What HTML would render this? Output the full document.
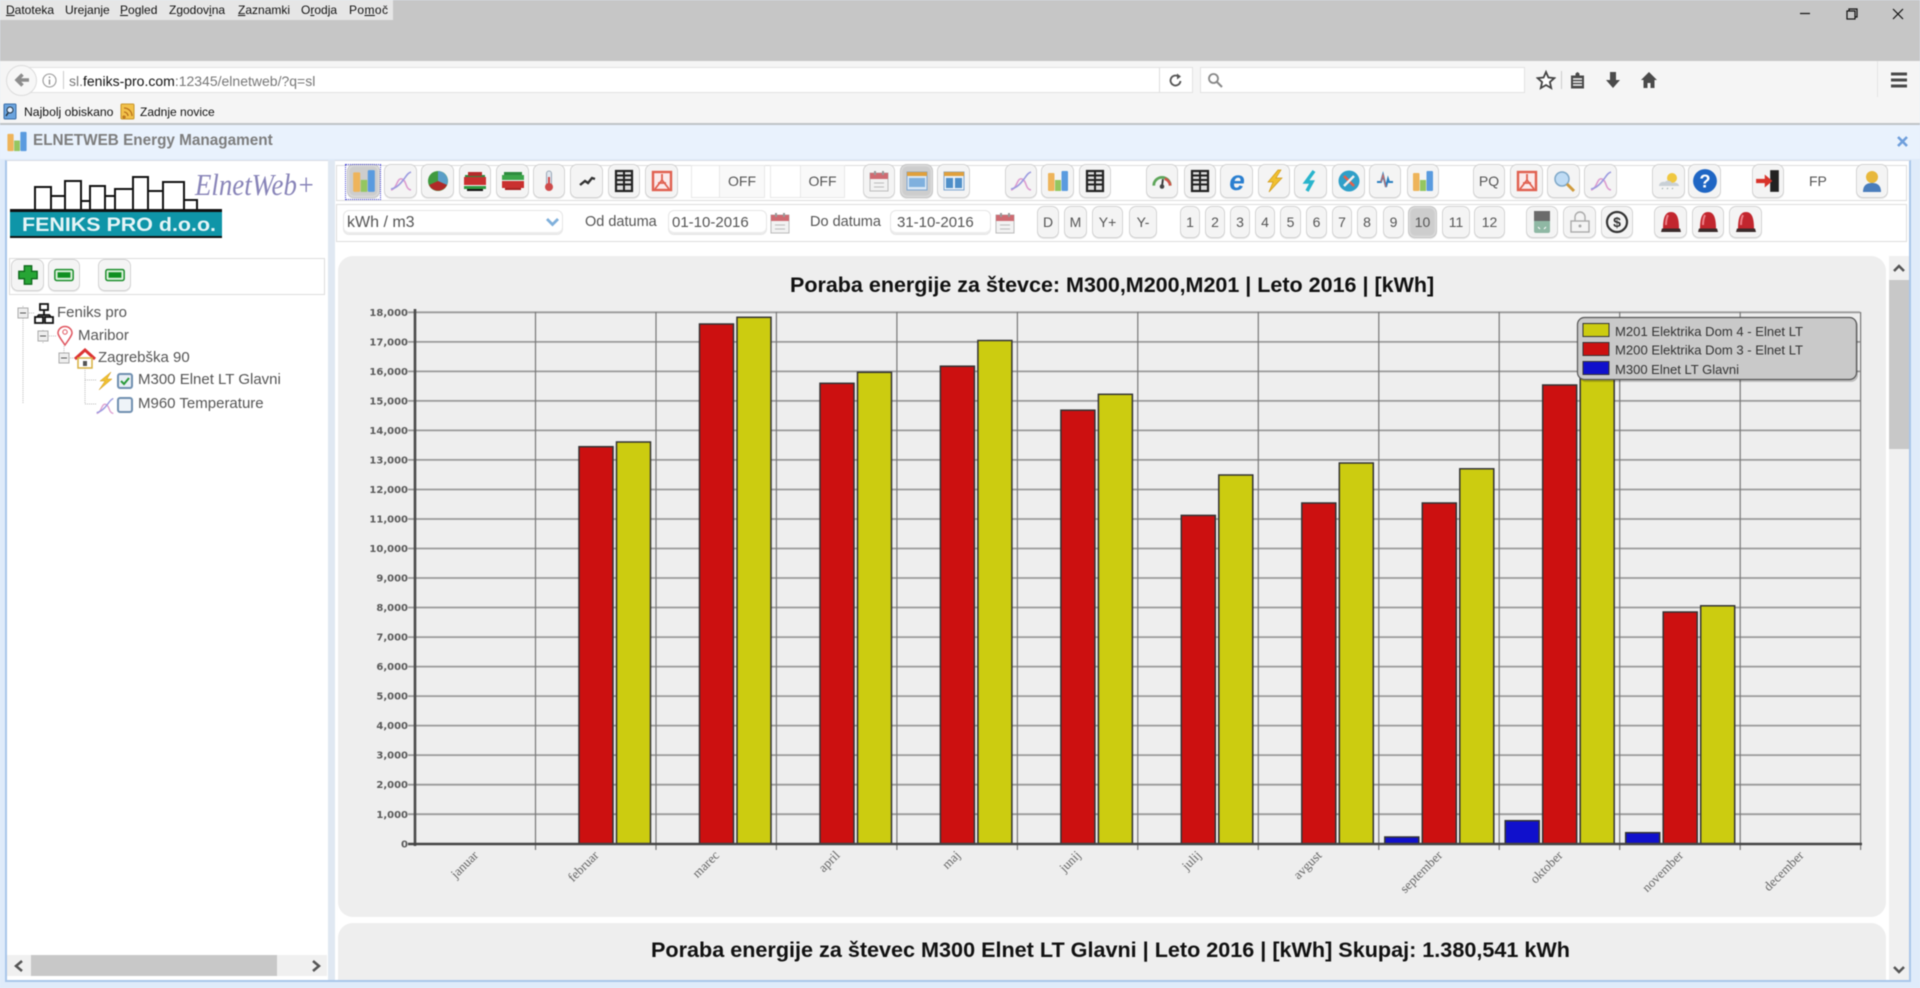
<!DOCTYPE html>
<html lang="sl"><head><meta charset="utf-8"><title>ELNETWEB Energy Managament</title>
<style>
html,body{margin:0;padding:0;width:1920px;height:988px;overflow:hidden;background:#e0ecfb;font-family:"Liberation Sans",sans-serif;color:#333}
#w{position:absolute;left:0;top:0;width:1920px;height:988px;overflow:hidden;filter:blur(.5px)}
.a,.b,.t,svg.a{position:absolute}
.b{box-sizing:border-box;background:#f4f4f4;border:1.5px solid #d2d2d2;border-radius:7px;box-shadow:inset 0 0 2px #fff,0 1px 0 #e8e8e8;display:flex;align-items:center;justify-content:center;font-size:14px;color:#555}
.b.on{background:#cdcdcd;border-color:#c4c4c4}
.r1{top:164px;height:34px}.r2{top:206px;height:32px}
.t{white-space:nowrap}
.m{top:3px;font-size:12px;color:#111;line-height:14px}
.tr{font-size:15px;color:#555;line-height:16px}
.inp{box-sizing:border-box;position:absolute;top:210px;height:25px;background:#fff;border:1px solid #e6e6e6;border-radius:6px;box-shadow:inset 0 -2px 0 #ececec;font-size:15px;color:#555;line-height:24px}
.off{position:absolute;top:165px;height:33px;box-sizing:border-box;background:#fff;border:1px solid #e8e8e8;font-size:14px;color:#555;text-align:center;line-height:31px}
</style></head><body><div id="w">

<svg width="0" height="0" style="position:absolute"><defs>
<symbol id="bars" viewBox="0 0 24 24"><rect x="2" y="4" width="6.500" height="18" rx="1" fill="#eeb45a"/><rect x="9" y="11" width="6" height="11" fill="#94c660"/><rect x="15.500" y="2" width="6.500" height="20" rx="1" fill="#5a9bdf"/></symbol>
<symbol id="curve" viewBox="0 0 24 24"><path d="M2 21C8 20 8 8 13 10S16 20 22 21" fill="none" stroke="#dc9ccf" stroke-width="1.600"/><path d="M2 20C8 19 12 14 15 10S19 4 22 3" fill="none" stroke="#9a9ae0" stroke-width="1.600"/></symbol>
<symbol id="pie" viewBox="0 0 24 24"><circle cx="12" cy="12" r="10" fill="#3f9a3f"/><path d="M12 12V2A10 10 0 0 1 21 16Z" fill="#5a9ec8"/><path d="M12 12L21 16A10 10 0 0 1 3 16Z" fill="#b02828"/></symbol>
<symbol id="st1" viewBox="0 0 24 24"><path d="M2 6h20v3H2z" fill="#2e8b3e"/><path d="M5 3h14v4H5z" fill="#b52a2a"/><path d="M1 8h22v8H1z" fill="#c93030"/><path d="M1 17h22v3H1z" fill="#2e9a40"/><path d="M4 20h16v2H4z" fill="#111"/></symbol>
<symbol id="st2" viewBox="0 0 24 24"><path d="M3 3h18v3H3z" fill="#2e8b3e"/><path d="M1 6h22v5H1z" fill="#3ca54a"/><path d="M1 12h22v7H1z" fill="#c93030"/><path d="M4 19h16v2H4z" fill="#a82222"/></symbol>
<symbol id="therm" viewBox="0 0 24 24"><rect x="9.500" y="2" width="5" height="16" rx="2.500" fill="#dfe6ee" stroke="#9aa8b8"/><circle cx="12" cy="18" r="4" fill="#cf4a4a"/><rect x="11" y="8" width="2" height="9" fill="#cf4a4a"/></symbol>
<symbol id="trend" viewBox="0 0 24 24"><path d="M5 16l5-4 3 2 4-5 3 1" fill="none" stroke="#333" stroke-width="2.400"/></symbol>
<symbol id="tbl" viewBox="0 0 24 24"><rect x="4" y="2" width="16" height="20" fill="#ddd" stroke="#222" stroke-width="2.200"/><path d="M4 6.500h16M4 11h16M4 15.500h16M12 2v20" stroke="#222" stroke-width="2" fill="none"/></symbol>
<symbol id="pdf" viewBox="0 0 24 24"><rect x="3" y="3" width="18" height="18" fill="#fbeaea" stroke="#e0604f" stroke-width="2.400"/><path d="M12 5v6L5 20M12 11l7 9M8 14h8" fill="none" stroke="#e0604f" stroke-width="1.800"/></symbol>
<symbol id="cal" viewBox="0 0 24 24"><rect x="3" y="4" width="18" height="18" fill="#f2f2f2" stroke="#bbb"/><rect x="3" y="4" width="18" height="6" fill="#cf6b72"/><rect x="7" y="2" width="2" height="4" fill="#999"/><rect x="15" y="2" width="2" height="4" fill="#999"/><path d="M7 14h10M7 18h10" stroke="#bbb"/></symbol>
<symbol id="win" viewBox="0 0 24 24"><rect x="2" y="3" width="20" height="18" fill="#d9e7f5" stroke="#7ea6cf"/><rect x="2" y="3" width="20" height="4" fill="#e0a03c"/><rect x="4" y="9" width="16" height="9" fill="#7fb0de"/></symbol>
<symbol id="win2" viewBox="0 0 24 24"><rect x="2" y="3" width="20" height="18" fill="#e8f0f8" stroke="#7ea6cf"/><rect x="2" y="3" width="20" height="4" fill="#e0a03c"/><rect x="4" y="9" width="7" height="10" fill="#4f8fc8"/><rect x="13" y="9" width="7" height="10" fill="#4f8fc8"/></symbol>
<symbol id="gauge" viewBox="0 0 24 24"><path d="M3 17A9 9 0 0 1 21 17" fill="none" stroke="#5ea65a" stroke-width="3"/><path d="M15 9.500A9 9 0 0 1 21 17" fill="none" stroke="#d0524a" stroke-width="3"/><path d="M12 18l1-8" stroke="#333" stroke-width="2"/><circle cx="12" cy="18" r="2.500" fill="#444"/></symbol>
<symbol id="ie" viewBox="0 0 24 24"><text x="12" y="21" text-anchor="middle" font-family="Liberation Sans" font-weight="700" font-style="italic" font-size="28" fill="#2a7fd0">e</text></symbol>
<symbol id="bolt" viewBox="0 0 24 24"><path d="M16 1L6 13h5l-4 10L20 9h-6l5-8z" fill="#f0c030" stroke="#d09818" stroke-width=".7"/></symbol>
<symbol id="bolt2" viewBox="0 0 24 24"><path d="M15 2L7 13h6l-5 9" fill="none" stroke="#28b4cc" stroke-width="3.500"/></symbol>
<symbol id="tools" viewBox="0 0 24 24"><circle cx="12" cy="12" r="10.500" fill="#2f9fc8"/><path d="M7 7l10 10" stroke="#e8604a" stroke-width="2.500"/><path d="M17 7L7 17" stroke="#f0f0f0" stroke-width="2.500"/></symbol>
<symbol id="pulse" viewBox="0 0 24 24"><path d="M4 13h4l2-7 3 12 2-8 1 3h4" fill="none" stroke="#2a7fc0" stroke-width="2"/><path d="M8 13l2-7 3 12" fill="none" stroke="#e06a5a" stroke-width="1"/></symbol>
<symbol id="search" viewBox="0 0 24 24"><circle cx="10" cy="10" r="7" fill="#bfdcf5" stroke="#7fa8c8" stroke-width="1.500"/><path d="M15 15l7 7" stroke="#d09a3c" stroke-width="3"/></symbol>
<symbol id="cloud" viewBox="0 0 24 24"><circle cx="15" cy="9" r="5" fill="#f0c840"/><path d="M2 17c0-3 3-5 6-4 1-2 6-2 7 1 3-1 7 0 7 3H2z" fill="#c9d0d6"/><path d="M5 20l1-1M10 20l1-1M15 20l1-1" stroke="#9aa" /></symbol>
<symbol id="help" viewBox="0 0 24 24"><circle cx="12" cy="12" r="11" fill="#1f66c4"/><text x="12" y="18" text-anchor="middle" font-family="Liberation Sans" font-weight="700" font-size="17" fill="#fff">?</text></symbol>
<symbol id="exit" viewBox="0 0 24 24"><rect x="14" y="2" width="8" height="20" fill="#222"/><path d="M1 10h8V6l7 6-7 6v-4H1z" fill="#d8332a"/></symbol>
<symbol id="user" viewBox="0 0 24 24"><circle cx="12" cy="8" r="6" fill="#e8b83c"/><path d="M3 23c0-7 4-9 9-9s9 2 9 9z" fill="#4a7dbc"/></symbol>
<symbol id="meter" viewBox="0 0 24 24"><rect x="4" y="1" width="16" height="22" rx="2" fill="#8fb8a4"/><rect x="4" y="1" width="16" height="10" fill="#6b6b6b"/><path d="M8 17l2 2M16 17l-2 2" stroke="#fff"/></symbol>
<symbol id="lock" viewBox="0 0 24 24"><rect x="3" y="11" width="18" height="11" fill="#f4f4f4" stroke="#aaa" stroke-width="1.400"/><path d="M7 11V7a5 5 0 0 1 10 0v4" fill="none" stroke="#aaa" stroke-width="1.400"/><circle cx="12" cy="16" r="1.500" fill="#aaa"/></symbol>
<symbol id="dollar" viewBox="0 0 24 24"><circle cx="12" cy="12" r="10" fill="#f4f4f4" stroke="#333" stroke-width="2.200"/><text x="12" y="17" text-anchor="middle" font-family="Liberation Sans" font-weight="700" font-size="14" fill="#333">$</text></symbol>
<symbol id="alarm" viewBox="0 0 24 24"><path d="M4 19C4 8 6 2 12 2s8 6 8 17z" fill="#c2262e"/><path d="M9 5c-1.500 3-2 6-2 10" stroke="#ee8088" stroke-width="2" fill="none"/><path d="M3 18.500h18l1 3.500H2z" fill="#3a2a2a"/></symbol>
<symbol id="plus" viewBox="0 0 24 24"><path d="M8 2h8v6h6v8h-6v6H8v-6H2V8h6z" fill="#27a535" stroke="#0e6a1c" stroke-width="1.500"/></symbol>
<symbol id="minus" viewBox="0 0 24 24"><rect x="2" y="6" width="20" height="12" rx="2" fill="#d8efd8" stroke="#148a24" stroke-width="1.500"/><rect x="5" y="9" width="14" height="6" fill="#0f8f20"/></symbol>
</defs></svg>

<!-- browser chrome -->
<div class="a" style="left:0;top:0;width:1920px;height:61px;background:#c6c6c6"></div>
<div class="a" style="left:0;top:0;width:393px;height:20px;background:#e6e6e6"></div>
<span class="t m" style="left:6px"><u>D</u>atoteka</span>
<span class="t m" style="left:65px">Ure<u>j</u>anje</span>
<span class="t m" style="left:120px"><u>P</u>ogled</span>
<span class="t m" style="left:169px">Zgodov<u>i</u>na</span>
<span class="t m" style="left:238px"><u>Z</u>aznamki</span>
<span class="t m" style="left:301px">O<u>r</u>odja</span>
<span class="t m" style="left:349px;letter-spacing:.4px">Po<u>m</u>oč</span>
<svg class="a" style="left:1795px;top:4px" width="115" height="22" fill="none" stroke="#111" stroke-width="1.200"><path d="M5 9.500h10"/><rect x="52" y="7" width="8" height="8" fill="#c6c6c6"/><path d="M54 7V5h8v8h-2"/><path d="M98 5l10 10M108 5L98 15"/></svg>

<div class="a" style="left:0;top:61px;width:1920px;height:62px;background:#f5f5f5"></div>
<div class="a" style="left:22px;top:67px;width:1171px;height:26px;background:#fff;border:1px solid #e2e2e2;box-sizing:border-box"></div>
<div class="a" style="left:6px;top:65px;width:31px;height:31px;border-radius:50%;background:#f7f7f7;border:1px solid #dcdcdc;box-sizing:border-box"></div>
<svg class="a" style="left:13px;top:71px" width="18" height="18"><path d="M16 9H6M9.500 3.500L4 9l5.500 5.500" fill="none" stroke="#8d8d8d" stroke-width="3.500"/></svg>
<svg class="a" style="left:42px;top:73px" width="15" height="15"><circle cx="7.500" cy="7.500" r="6.500" fill="none" stroke="#999" stroke-width="1.100"/><path d="M7.500 6.500v5M7.500 3.500v1.500" stroke="#888" stroke-width="1.300"/></svg>
<div class="a" style="left:63px;top:71px;width:1px;height:18px;background:#ccc"></div>
<div class="t" style="left:69px;top:72px;font-size:14px;color:#777;line-height:18px">sl.<span style="color:#111">feniks-pro.com</span>:12345/elnetweb/?q=sl</div>
<div class="a" style="left:1159px;top:68px;width:1px;height:24px;background:#ddd"></div>
<svg class="a" style="left:1168px;top:73px" width="15" height="15"><path d="M12.500 8A5 5 0 1 1 10.500 3.500" fill="none" stroke="#555" stroke-width="1.800"/><path d="M9 0.500L13 3.500 9 6.500z" fill="#555"/></svg>
<div class="a" style="left:1200px;top:67px;width:325px;height:26px;background:#fff;border:1px solid #e2e2e2;box-sizing:border-box"></div>
<svg class="a" style="left:1207px;top:72px" width="16" height="16"><circle cx="6.500" cy="6.500" r="4.500" fill="none" stroke="#888" stroke-width="1.800"/><path d="M10 10l5 5" stroke="#888" stroke-width="2"/></svg>
<svg class="a" style="left:1536px;top:70px" width="20" height="20"><path d="M10 2l2.400 5.500 6 .6-4.500 4 1.300 6L10 15l-5.200 3.100 1.300-6-4.500-4 6-.6z" fill="#fff" stroke="#444" stroke-width="1.800"/></svg>
<div class="a" style="left:1561px;top:71px;width:1px;height:18px;background:#ccc"></div>
<svg class="a" style="left:1570px;top:71px" width="15" height="18"><path d="M1 4.500h4.500V2.500L7.500 1 9.500 2.500v2H14v13H1z" fill="#4a4a4a"/><path d="M3 8h9M3 11h9M3 14h9" stroke="#f5f5f5" stroke-width="1.400"/></svg>
<svg class="a" style="left:1605px;top:71px" width="16" height="18"><path d="M5 1h6v8h4l-7 8-7-8h4z" fill="#4a4a4a"/></svg>
<svg class="a" style="left:1641px;top:71px" width="16" height="18"><path d="M8 1L0 9h2.500v8h4v-5h3v5h4V9H16z" fill="#4a4a4a"/></svg>
<div class="a" style="left:1877px;top:61px;width:1px;height:36px;background:#e4e4e4"></div>
<svg class="a" style="left:1891px;top:72px" width="16" height="16"><path d="M0 2h16M0 8h16M0 14h16" stroke="#4a4a4a" stroke-width="3"/></svg>
<svg class="a" style="left:3px;top:103px" width="16" height="17"><rect x="1" y="1" width="12" height="15" rx="1" fill="#6ba4de" stroke="#3a6ea8"/><circle cx="7" cy="7" r="3" fill="#dfeeff" stroke="#234"/><path d="M5 10l-2 3" stroke="#234" stroke-width="1.500"/></svg>
<div class="t" style="left:24px;top:104px;font-size:12.200px;color:#111;line-height:16px">Najbolj obiskano</div>
<svg class="a" style="left:120px;top:103px" width="15" height="17"><rect x="1" y="1" width="13" height="15" rx="1" fill="#f2c14a" stroke="#c8962c"/><path d="M4 13a1 1 0 1 0 .1 0M4 9a4 4 0 0 1 4 4M4 5a8 8 0 0 1 8 8" stroke="#b8701c" fill="none" stroke-width="1.300"/></svg>
<div class="t" style="left:140px;top:104px;font-size:12px;color:#111;line-height:16px">Zadnje novice</div>
<div class="a" style="left:0;top:123px;width:1920px;height:2px;background:#bfc3c6"></div>

<!-- app head -->
<div class="a" style="left:0;top:125px;width:1920px;height:34px;background:#e9f2fd"></div>
<svg class="a" style="left:5px;top:130px" width="24" height="23"><use href="#bars"/></svg>
<div class="t" style="left:33px;top:132px;font-size:15.300px;font-weight:700;color:#7d7d7d;line-height:18px">ELNETWEB Energy Managament</div>
<svg class="a" style="left:1897px;top:136px" width="11" height="11"><path d="M1 1l9 9M10 1l-9 9" stroke="#6f9fdc" stroke-width="2.600"/></svg>

<!-- frame -->
<div class="a" style="left:0;top:159px;width:1920px;height:829px;background:#dfebfa"></div>
<div class="a" style="left:5px;top:160px;width:323px;height:822px;background:#fff;border-left:2px solid #a9c6ea;border-top:1px solid #d8dde3;border-bottom:2px solid #a9c6ea;box-sizing:border-box"></div>
<div class="a" style="left:328px;top:160px;width:7px;height:822px;background:#e0e8f2;border-bottom:2px solid #a9c6ea;box-sizing:border-box"></div>
<div class="a" style="left:335px;top:160px;width:1576px;height:822px;background:#fff;border-right:2px solid #a9c6ea;border-bottom:2px solid #a9c6ea;border-top:1px solid #d8dde3;box-sizing:border-box"></div>

<!-- logo -->
<svg class="a" style="left:0;top:160px" width="328" height="85" viewBox="0 160 328 85">
<g fill="none" stroke="#111" stroke-width="2"><rect x="35" y="187" width="16" height="23"/><rect x="51" y="196" width="14" height="14"/><rect x="65" y="181" width="16" height="29"/><rect x="81" y="201" width="9" height="9"/><rect x="90" y="186" width="15" height="24"/><rect x="105" y="196" width="10" height="14"/><rect x="115" y="189" width="18" height="21"/><rect x="133" y="177" width="15" height="33"/><rect x="148" y="191" width="15" height="19"/><rect x="163" y="182" width="21" height="28"/><rect x="184" y="200" width="13" height="10"/></g>
<rect x="10" y="209" width="212" height="29" fill="#111"/><rect x="10" y="212" width="212" height="24" fill="#0f95a8"/>
<text x="22" y="231" font-family="Liberation Sans" font-weight="700" font-size="19" fill="#e6f5f7" textLength="194" lengthAdjust="spacingAndGlyphs">FENIKS PRO d.o.o.</text>
<text x="195" y="195" font-family="Liberation Serif" font-style="italic" font-size="31" fill="#8884b8" textLength="120" lengthAdjust="spacingAndGlyphs">ElnetWeb+</text>
</svg>

<!-- tree toolbar -->
<div class="a" style="left:9px;top:258px;width:316px;height:37px;background:#fff;border:1px solid #ddd;box-sizing:border-box"></div>
<div class="b" style="left:11px;top:259px;width:33px;height:32px"><svg width="22" height="22"><use href="#plus"/></svg></div>
<div class="b" style="left:48px;top:259px;width:32px;height:32px"><svg width="22" height="22"><use href="#minus"/></svg></div>
<div class="b" style="left:98px;top:259px;width:33px;height:32px"><svg width="22" height="22"><use href="#minus"/></svg></div>

<!-- tree -->
<svg class="a" style="left:10px;top:300px" width="130" height="120" viewBox="10 300 130 120">
<g stroke="#bbb" stroke-dasharray="1 1" fill="none"><path d="M23 306V404M23 313H34M43 336H57M43 330V344M64 344V358M64 358H75M85 368V404M85 380H97M85 404H96"/></g>
<g fill="#eee" stroke="#aaa"><rect x="18" y="308" width="10" height="10"/><rect x="38" y="331" width="10" height="10"/><rect x="59" y="353" width="10" height="10"/></g>
<path d="M20 313h6M40 336h6M61 358h6" stroke="#555"/>
<g fill="none" stroke="#111" stroke-width="1.800"><rect x="40" y="304" width="8" height="6"/><path d="M44 310v5M38 315h12M38 315v2M50 315v2"/><rect x="35" y="317" width="8" height="6"/><rect x="45" y="317" width="8" height="6"/></g>
<path d="M65 345C60 338 58 335 58 333a7 6.500 0 0 1 14 0C72 335 70 338 65 345z" fill="#fff" stroke="#e0555f" stroke-width="1.500"/><circle cx="65" cy="332" r="2.200" fill="none" stroke="#e0555f"/>
<path d="M75 359L85 350 95 359" fill="none" stroke="#d33" stroke-width="3"/><rect x="78" y="358" width="14" height="10" fill="#fff" stroke="#d8b040" stroke-width="1.500"/><rect x="83" y="361" width="4" height="5" fill="#555"/>
<path d="M111 372L100 381h5l-6 9 13-11h-5z" fill="#f0c030" stroke="#d09818" stroke-width=".5"/>
<g><use href="#curve" x="95" y="396" width="20" height="20"/></g>
<rect x="118" y="374" width="14" height="14" rx="2" fill="#e8eef5" stroke="#6f8fb0" stroke-width="2"/><path d="M121 381l3 3 5-6" fill="none" stroke="#2a9a3a" stroke-width="2"/>
<rect x="118" y="398" width="14" height="14" rx="2" fill="#eef3f8" stroke="#6f8fb0" stroke-width="2"/>
</svg>
<div class="t tr" style="left:57px;top:305px">Feniks pro</div>
<div class="t tr" style="left:78px;top:328px">Maribor</div>
<div class="t tr" style="left:98px;top:350px">Zagrebška 90</div>
<div class="t tr" style="left:138px;top:372px">M300 Elnet LT Glavni</div>
<div class="t tr" style="left:138px;top:396px">M960 Temperature</div>

<!-- left h-scrollbar -->
<div class="a" style="left:7px;top:955px;width:320px;height:21px;background:#f0f0f0"></div>
<div class="a" style="left:31px;top:955px;width:246px;height:21px;background:#c8c8c8"></div>
<svg class="a" style="left:14px;top:960px" width="10" height="12"><path d="M8 1L2 6l6 5" fill="none" stroke="#555" stroke-width="2.500"/></svg>
<svg class="a" style="left:311px;top:960px" width="10" height="12"><path d="M2 1l6 5-6 5" fill="none" stroke="#555" stroke-width="2.500"/></svg>

<!-- toolbars -->
<div class="a" style="left:336px;top:165px;width:1571px;height:36px;background:#fff;border:1px solid #ddd;box-sizing:border-box"></div>
<div class="a" style="left:336px;top:204px;width:1571px;height:38px;background:#fff;border:1px solid #ddd;box-sizing:border-box"></div>

<div class="b r1 on" style="left:347px;width:33px"><svg width="26" height="26"><use href="#bars"/></svg></div>
<div class="a" style="left:345px;top:164px;width:36px;height:36px;border:1px dotted #3a3ad0;box-sizing:border-box"></div>
<div class="b r1" style="left:384px;width:33px"><svg width="24" height="24"><use href="#curve"/></svg></div>
<div class="b r1" style="left:421px;width:33px"><svg width="24" height="24"><use href="#pie"/></svg></div>
<div class="b r1" style="left:459px;width:32px"><svg width="24" height="24"><use href="#st1"/></svg></div>
<div class="b r1" style="left:496px;width:33px"><svg width="24" height="24"><use href="#st2"/></svg></div>
<div class="b r1" style="left:533px;width:32px"><svg width="24" height="24"><use href="#therm"/></svg></div>
<div class="b r1" style="left:570px;width:33px"><svg width="24" height="24"><use href="#trend"/></svg></div>
<div class="b r1" style="left:608px;width:32px"><svg width="24" height="24"><use href="#tbl"/></svg></div>
<div class="b r1" style="left:645px;width:33px"><svg width="24" height="24"><use href="#pdf"/></svg></div>
<div class="off" style="left:691px;width:29px"></div><div class="off" style="left:719px;width:46px;background:#f9f9f9">OFF</div>
<div class="off" style="left:770px;width:31px"></div><div class="off" style="left:800px;width:45px;background:#f9f9f9">OFF</div>
<div class="b r1" style="left:863px;width:32px"><svg width="24" height="24"><use href="#cal"/></svg></div>
<div class="b r1 on" style="left:900px;width:33px"><svg width="24" height="24"><use href="#win"/></svg></div>
<div class="b r1" style="left:937px;width:33px"><svg width="24" height="24"><use href="#win2"/></svg></div>
<div class="b r1" style="left:1005px;width:32px"><svg width="24" height="24"><use href="#curve"/></svg></div>
<div class="b r1" style="left:1041px;width:33px"><svg width="24" height="24"><use href="#bars"/></svg></div>
<div class="b r1" style="left:1079px;width:32px"><svg width="24" height="24"><use href="#tbl"/></svg></div>
<div class="b r1" style="left:1146px;width:32px"><svg width="22" height="22"><use href="#gauge"/></svg></div>
<div class="b r1" style="left:1184px;width:32px"><svg width="24" height="24"><use href="#tbl"/></svg></div>
<div class="b r1" style="left:1220px;width:33px"><svg width="24" height="24"><use href="#ie"/></svg></div>
<div class="b r1" style="left:1258px;width:32px"><svg width="24" height="24"><use href="#bolt"/></svg></div>
<div class="b r1" style="left:1294px;width:33px"><svg width="24" height="24"><use href="#bolt2"/></svg></div>
<div class="b r1" style="left:1332px;width:33px"><svg width="24" height="24"><use href="#tools"/></svg></div>
<div class="b r1" style="left:1369px;width:32px"><svg width="24" height="24"><use href="#pulse"/></svg></div>
<div class="b r1" style="left:1407px;width:32px"><svg width="24" height="24"><use href="#bars"/></svg></div>
<div class="b r1" style="left:1473px;width:32px">PQ</div>
<div class="b r1" style="left:1510px;width:33px"><svg width="24" height="24"><use href="#pdf"/></svg></div>
<div class="b r1" style="left:1547px;width:33px"><svg width="24" height="24"><use href="#search"/></svg></div>
<div class="b r1" style="left:1584px;width:33px"><svg width="24" height="24"><use href="#curve"/></svg></div>
<div class="b r1" style="left:1652px;width:33px"><svg width="24" height="24"><use href="#cloud"/></svg></div>
<div class="b r1" style="left:1688px;width:33px"><svg width="26" height="26"><use href="#help"/></svg></div>
<div class="b r1" style="left:1752px;width:32px"><svg width="26" height="26"><use href="#exit"/></svg></div>
<div class="t" style="left:1809px;top:172px;font-size:14px;color:#555;line-height:18px">FP</div>
<div class="b r1" style="left:1856px;width:32px"><svg width="24" height="24"><use href="#user"/></svg></div>

<div class="inp" style="left:343px;width:220px;padding-left:3px;font-size:16px">kWh / m3</div>
<svg class="a" style="left:546px;top:217px" width="13" height="10"><path d="M1 2l5.500 5.500L12 2" fill="none" stroke="#7fb0dc" stroke-width="2.800"/></svg>
<div class="t" style="left:585px;top:213px;font-size:14.500px;color:#555;line-height:18px">Od datuma</div>
<div class="inp" style="left:668px;width:99px;padding-left:3px">01-10-2016</div>
<svg class="a" style="left:768px;top:210px" width="24" height="26"><use href="#cal"/></svg>
<div class="t" style="left:810px;top:213px;font-size:14.500px;color:#555;line-height:18px">Do datuma</div>
<div class="inp" style="left:890px;width:101px;padding-left:6px">31-10-2016</div>
<svg class="a" style="left:993px;top:210px" width="24" height="26"><use href="#cal"/></svg>

<div class="b r2" style="left:1037px;width:22px">D</div>
<div class="b r2" style="left:1064px;width:23px">M</div>
<div class="b r2" style="left:1092px;width:31px">Y+</div>
<div class="b r2" style="left:1129px;width:28px">Y-</div>
<div class="b r2" style="left:1180px;width:20px">1</div>
<div class="b r2" style="left:1205px;width:20px">2</div>
<div class="b r2" style="left:1230px;width:20px">3</div>
<div class="b r2" style="left:1255px;width:20px">4</div>
<div class="b r2" style="left:1280px;width:21px">5</div>
<div class="b r2" style="left:1306px;width:21px">6</div>
<div class="b r2" style="left:1332px;width:20px">7</div>
<div class="b r2" style="left:1357px;width:20px">8</div>
<div class="b r2" style="left:1383px;width:21px">9</div>
<div class="b r2 on" style="left:1408px;width:29px">10</div>
<div class="b r2" style="left:1442px;width:28px">11</div>
<div class="b r2" style="left:1474px;width:31px">12</div>
<div class="b r2" style="left:1526px;width:32px"><svg width="24" height="24"><use href="#meter"/></svg></div>
<div class="b r2" style="left:1563px;width:33px"><svg width="24" height="24"><use href="#lock"/></svg></div>
<div class="b r2" style="left:1601px;width:32px"><svg width="24" height="24"><use href="#dollar"/></svg></div>
<div class="b r2" style="left:1654px;width:33px"><svg width="24" height="24"><use href="#alarm"/></svg></div>
<div class="b r2" style="left:1692px;width:32px"><svg width="24" height="24"><use href="#alarm"/></svg></div>
<div class="b r2" style="left:1729px;width:33px"><svg width="24" height="24"><use href="#alarm"/></svg></div>

<!-- panels -->
<div class="a" style="left:338px;top:256px;width:1548px;height:661px;background:#eee;border-radius:15px"></div>
<div class="a" style="left:338px;top:923px;width:1548px;height:57px;background:#eee;border-radius:15px 15px 0 0"></div>
<div class="t" style="left:790px;top:273px;font-size:21.500px;font-weight:700;color:#111;line-height:24px">Poraba energije za števce: M300,M200,M201 | Leto 2016 | [kWh]</div>
<div class="t" style="left:651px;top:938px;font-size:21.600px;font-weight:700;color:#111;line-height:24px">Poraba energije za števec M300 Elnet LT Glavni | Leto 2016 | [kWh] Skupaj: 1.380,541 kWh</div>

<!-- right v-scrollbar -->
<div class="a" style="left:1889px;top:256px;width:20px;height:724px;background:#f0f0f0"></div>
<div class="a" style="left:1889px;top:280px;width:20px;height:169px;background:#c8c8c8"></div>
<svg class="a" style="left:1893px;top:263px" width="12" height="10"><path d="M1 8l5-5 5 5" fill="none" stroke="#555" stroke-width="2.500"/></svg>
<svg class="a" style="left:1893px;top:965px" width="12" height="10"><path d="M1 2l5 5 5-5" fill="none" stroke="#555" stroke-width="2.500"/></svg>

<!-- chart -->
<svg class="a" style="left:338px;top:256px" width="1548" height="661" viewBox="338 256 1548 661">
<path d="M408 814.200H1860M408 784.700H1860M408 755.100H1860M408 725.600H1860M408 696.100H1860M408 666.600H1860M408 637.100H1860M408 607.500H1860M408 578H1860M408 548.500H1860M408 519H1860M408 489.500H1860M408 459.900H1860M408 430.400H1860M408 400.900H1860M408 371.400H1860M408 341.900H1860M408 312.300H1860" stroke="#9a9a9a" stroke-width="1.800" fill="none"/>
<path d="M535.500 312V850M656 312V850M776.400 312V850M896.900 312V850M1017.400 312V850M1137.800 312V850M1258.300 312V850M1378.800 312V850M1499.200 312V850M1619.700 312V850M1740.200 312V850M1860.600 312V850" stroke="#777" stroke-width="1.200" fill="none"/>
<g stroke="#333" stroke-width="1.500">
<g fill="#cc1010"><rect x="579" y="446.700" width="34" height="397"/><rect x="699.500" y="324" width="34" height="519.700"/><rect x="820" y="383.300" width="34" height="460.400"/><rect x="940.400" y="366.200" width="34" height="477.500"/><rect x="1060.900" y="410.200" width="34" height="433.500"/><rect x="1181.300" y="515.400" width="34" height="328.300"/><rect x="1301.800" y="503" width="34" height="340.700"/><rect x="1422.300" y="503" width="34" height="340.700"/><rect x="1542.700" y="385" width="34" height="458.700"/><rect x="1663.200" y="612" width="34" height="231.700"/></g>
<g fill="#cccc10"><rect x="616.500" y="442" width="34" height="401.700"/><rect x="737" y="317.300" width="34" height="526.400"/><rect x="857.500" y="372.300" width="34" height="471.400"/><rect x="977.900" y="340.500" width="34" height="503.200"/><rect x="1098.400" y="394.300" width="34" height="449.400"/><rect x="1218.800" y="475" width="34" height="368.700"/><rect x="1339.300" y="463" width="34" height="380.700"/><rect x="1459.800" y="468.800" width="34" height="374.900"/><rect x="1580.200" y="371.400" width="34" height="472.300"/><rect x="1700.700" y="605.800" width="34" height="237.900"/></g>
<g fill="#1010cc"><rect x="1384.800" y="837" width="34" height="6.700"/><rect x="1505.200" y="820.700" width="34" height="23"/><rect x="1625.700" y="832.700" width="34" height="11"/></g>
</g>
<path d="M415 309V846" stroke="#4a4a4a" stroke-width="2.600"/>
<path d="M408 844H1862" stroke="#444" stroke-width="2.600"/>
<g font-family="DejaVu Sans" font-weight="700" font-size="10" fill="#5a5a5a" text-anchor="end">
<text x="408" y="316">18,000</text><text x="408" y="345.500">17,000</text><text x="408" y="375">16,000</text><text x="408" y="404.500">15,000</text><text x="408" y="434">14,000</text><text x="408" y="463.500">13,000</text><text x="408" y="493">12,000</text><text x="408" y="522.500">11,000</text><text x="408" y="552">10,000</text><text x="408" y="581.500">9,000</text><text x="408" y="611">8,000</text><text x="408" y="640.500">7,000</text><text x="408" y="670">6,000</text><text x="408" y="699.500">5,000</text><text x="408" y="729">4,000</text><text x="408" y="758.500">3,000</text><text x="408" y="788">2,000</text><text x="408" y="818">1,000</text><text x="408" y="847.500">0</text>
</g>
<g font-family="Liberation Serif" font-size="13" fill="#666" text-anchor="end">
<text transform="translate(479 856) rotate(-45)">januar</text>
<text transform="translate(599.500 856) rotate(-45)">februar</text>
<text transform="translate(720 856) rotate(-45)">marec</text>
<text transform="translate(840.500 856) rotate(-45)">april</text>
<text transform="translate(961 856) rotate(-45)">maj</text>
<text transform="translate(1081.500 856) rotate(-45)">junij</text>
<text transform="translate(1202 856) rotate(-45)">julij</text>
<text transform="translate(1322.500 856) rotate(-45)">avgust</text>
<text transform="translate(1443 856) rotate(-45)">september</text>
<text transform="translate(1563.500 856) rotate(-45)">oktober</text>
<text transform="translate(1684 856) rotate(-45)">november</text>
<text transform="translate(1804.500 856) rotate(-45)">december</text>
</g>
<rect x="1579" y="319" width="279" height="63" rx="7" fill="#000" opacity=".2"/>
<rect x="1577.500" y="317.500" width="279" height="62" rx="7" fill="#c9c9c9" stroke="#555" stroke-width="1.200"/>
<g stroke="#333"><rect x="1583" y="323.500" width="26" height="13" fill="#cccc10"/><rect x="1583" y="342.500" width="26" height="13" fill="#cc1010"/><rect x="1583" y="361.500" width="26" height="13" fill="#1010cc"/></g>
<g font-family="Liberation Sans" font-size="12.500" fill="#333">
<text x="1615" y="336" textLength="188" lengthAdjust="spacingAndGlyphs">M201 Elektrika Dom 4 - Elnet LT</text>
<text x="1615" y="354.500" textLength="188" lengthAdjust="spacingAndGlyphs">M200 Elektrika Dom 3 - Elnet LT</text>
<text x="1615" y="374" textLength="124" lengthAdjust="spacingAndGlyphs">M300 Elnet LT Glavni</text>
</g>
</svg>

</div></body></html>
